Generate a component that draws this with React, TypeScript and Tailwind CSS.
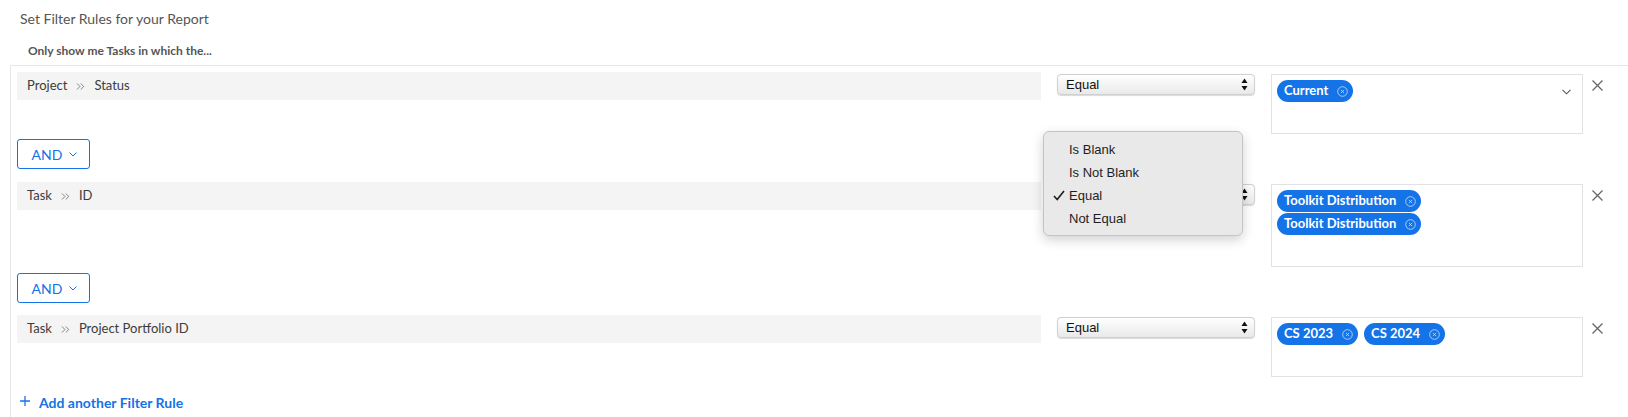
import { ChevronsRight } from 'lucide-react';

const BLUE = '#1473e6';

interface Rule {
  path: string[];
  values: string[];
  stacked?: boolean;
  showChevron?: boolean;
}

const rules: Rule[] = [
  { path: ['Project', 'Status'], values: ['Current'], showChevron: true },
  { path: ['Task', 'ID'], values: ['Toolkit Distribution', 'Toolkit Distribution'], stacked: true },
  { path: ['Task', 'Project Portfolio ID'], values: ['CS 2023', 'CS 2024'] },
];

function CircleX() {
  return (
    <svg width="11" height="11" viewBox="0 0 11 11" className="shrink-0 opacity-80">
      <circle cx="5.5" cy="5.5" r="4.8" fill="none" stroke="white" strokeWidth="0.8" />
      <path d="M3.9 3.9 L7.1 7.1 M7.1 3.9 L3.9 7.1" stroke="white" strokeWidth="0.8" />
    </svg>
  );
}

function Pill({ label }: { label: string }) {
  return (
    <span className="inline-flex h-[22px] items-center gap-[9px] rounded-full bg-[#1473e6] pl-[7px] pr-[5px] text-[13px] font-bold text-white">
      {label}
      <CircleX />
    </span>
  );
}

function SelectArrows() {
  return (
    <svg width="7" height="13" viewBox="0 0 7 13">
      <path d="M3.5 0.5 L6.5 5 L0.5 5 Z" fill="#111" />
      <path d="M3.5 12.5 L6.5 8 L0.5 8 Z" fill="#111" />
    </svg>
  );
}

function NativeSelect() {
  return (
    <div
      className="flex h-[21px] w-[198px] items-center justify-between rounded-[4px] border border-[#d0d0d0] bg-gradient-to-b from-white to-[#e9e9e9] pl-[8px] pr-[6px] text-[13px] text-[#111] shadow-[0_0.5px_1px_rgba(0,0,0,0.15)]"
      style={{ fontFamily: '"Liberation Sans", Arial, sans-serif' }}
    >
      <span>Equal</span>
      <SelectArrows />
    </div>
  );
}

function PopupMenu() {
  const items = ['Is Blank', 'Is Not Blank', 'Equal', 'Not Equal'];
  return (
    <div
      className="absolute left-[-14px] top-[-53px] z-10 w-[200px] rounded-[6px] border border-[#c4c4c4] bg-[#e9e9e9] pb-[5px] pt-[6px] text-[13px] text-[#1e1e1e] shadow-[0_4px_12px_rgba(0,0,0,0.18)]"
      style={{ fontFamily: '"Liberation Sans", Arial, sans-serif' }}
    >
      {items.map((it) => (
        <div key={it} className="relative flex h-[23px] items-center pl-[25px]">
          {it === 'Equal' && (
            <svg width="12" height="11" viewBox="0 0 12 11" className="absolute left-[9px] top-[6px]">
              <path d="M1 6 L4.2 9.5 L11 1" fill="none" stroke="#1e1e1e" strokeWidth="1.6" />
            </svg>
          )}
          {it}
        </div>
      ))}
    </div>
  );
}

function CloseX() {
  return (
    <svg width="11" height="11" viewBox="0 0 11 11" className="ml-[9px] mt-[8px] shrink-0">
      <path d="M0.5 0.5 L10.5 10.5 M10.5 0.5 L0.5 10.5" stroke="#666" strokeWidth="1.3" />
    </svg>
  );
}

function RuleRow({ rule, withMenu }: { rule: Rule; withMenu?: boolean }) {
  return (
    <div className="flex items-start">
      <div className="flex h-[28px] w-[1024px] shrink-0 items-center gap-[7px] bg-[#f4f4f4] pl-[10px] text-[13px] text-[#3c3c3c]">
        <span>{rule.path[0]}</span>
        <ChevronsRight size={13} strokeWidth={1.3} className="text-[#555]" />
        <span>{rule.path[1]}</span>
      </div>
      <div className="relative ml-[16px] mt-[2px] shrink-0">
        <NativeSelect />
        {withMenu && <PopupMenu />}
      </div>
      <div className="ml-[16px] mt-[2px] flex w-[312px] shrink-0 border border-[#e2e2e2] px-[5px] pb-[6px] pt-[5px]">
        <div className="flex-1">
          <div
            className={
              rule.stacked
                ? 'flex flex-col items-start gap-[1px]'
                : 'flex flex-wrap gap-x-[6px] gap-y-[1px]'
            }
          >
            {rule.values.map((v, i) => (
              <Pill key={i} label={v} />
            ))}
          </div>
          <div className="h-[25px]" />
        </div>
        {rule.showChevron && (
          <svg width="9" height="6" viewBox="0 0 9 6" className="mr-[6px] mt-[9px]">
            <path d="M0.5 0.8 L4.5 4.8 L8.5 0.8" fill="none" stroke="#555" strokeWidth="1.1" />
          </svg>
        )}
      </div>
      <CloseX />
    </div>
  );
}

function AndButton() {
  return (
    <button className="flex h-[30px] w-[73px] items-center justify-center gap-[7px] rounded-[3px] border border-[#1473e6] bg-white pl-[2px] text-[14px] text-[#1473e6]">
      AND
      <svg width="8" height="5" viewBox="0 0 8 5">
        <path d="M0.5 0.5 L4 4 L7.5 0.5" fill="none" stroke={BLUE} strokeWidth="1" />
      </svg>
    </button>
  );
}

export default function App() {
  return (
    <div
      className="h-[417px] w-[1628px] overflow-hidden bg-white"
      style={{ fontFamily: 'Lato, "Open Sans", Arial, sans-serif' }}
    >
      <div className="pl-[20px] pt-[10px] text-[14px] leading-[18px] text-[#555]">
        Set Filter Rules for your Report
      </div>
      <div className="mt-[16px] pl-[28px] text-[12px] font-bold leading-[14px] text-[#555]">
        Only show me Tasks in which the...
      </div>
      <div className="ml-[10px] mt-[7px] h-[400px] border-l border-t border-[#e6e6e6] pl-[6px] pt-[6px]">
        <RuleRow rule={rules[0]} />
        <div className="mt-[5px]">
          <AndButton />
        </div>
        <div className="mt-[13px]">
          <RuleRow rule={rules[1]} withMenu />
        </div>
        <div className="mt-[6px]">
          <AndButton />
        </div>
        <div className="mt-[12px]">
          <RuleRow rule={rules[2]} />
        </div>
        <div className="mt-[18px] flex items-center gap-[9px] pl-[3px] text-[14px] font-bold leading-[16px] text-[#1473e6]">
          <svg width="10" height="10" viewBox="0 0 10 10" className="-mt-[5px]">
            <path d="M5 0 V10 M0 5 H10" stroke={BLUE} strokeWidth="1.3" />
          </svg>
          Add another Filter Rule
        </div>
      </div>
    </div>
  );
}
